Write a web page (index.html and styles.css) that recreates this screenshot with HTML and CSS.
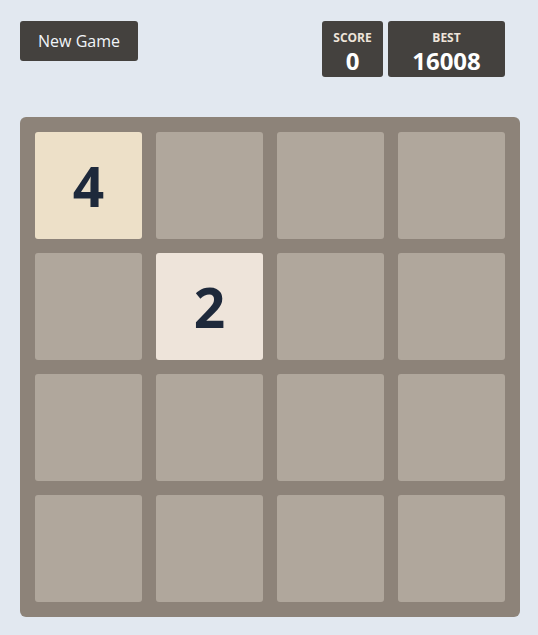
FILE: index.html
```html
<!DOCTYPE html>
<html>
<head>
<meta charset="utf-8">
<link rel="stylesheet" href="styles.css">
</head>
<body>
<div class="page">
  <header class="top">
    <button class="new-game">New Game</button>
    <div class="scores">
      <div class="score-box score"><div class="label">SCORE</div><div class="value">0</div></div>
      <div class="score-box best"><div class="label">BEST</div><div class="value">16008</div></div>
    </div>
  </header>
  <div class="board">
    <div class="cell t4">4</div><div class="cell"></div><div class="cell"></div><div class="cell"></div>
    <div class="cell"></div><div class="cell t2">2</div><div class="cell"></div><div class="cell"></div>
    <div class="cell"></div><div class="cell"></div><div class="cell"></div><div class="cell"></div>
    <div class="cell"></div><div class="cell"></div><div class="cell"></div><div class="cell"></div>
  </div>
</div>
</body>
</html>
```
FILE: styles.css
```css
html, body { margin: 0; padding: 0; }
body {
  background: #e2e8f0;
  font-family: "Open Sans", "Noto Sans", sans-serif;
  width: 538px;
  height: 635px;
  overflow: hidden;
}
.page { padding: 21px 18px 0 20px; }
.top {
  display: flex;
  justify-content: space-between;
  align-items: flex-start;
  height: 96px;
}
.new-game {
  width: 118px;
  height: 40px;
  background: #44413e;
  color: #f1f5f9;
  border: none;
  border-radius: 3px;
  font-family: inherit;
  font-size: 16px;
  padding: 0;
  cursor: pointer;
}
.scores { display: flex; gap: 5px; margin-right: 15px; }
.score-box {
  background: #44413e;
  border-radius: 3px;
  height: 56px;
  box-sizing: border-box;
  padding-top: 10px;
  display: flex;
  flex-direction: column;
  align-items: center;
  color: #fff;
}
.score { width: 61px; }
.best { width: 117px; }
.label { font-size: 12px; font-weight: 700; color: #eee4da; line-height: 13px; }
.value { font-size: 24px; font-weight: 700; line-height: 22px; margin-top: 6px; }
.board {
  width: 500px;
  height: 500px;
  box-sizing: border-box;
  background: #8d8379;
  border-radius: 6px;
  padding: 15px;
  display: grid;
  grid-template-columns: repeat(4, 1fr);
  grid-template-rows: repeat(4, 1fr);
  gap: 14px;
}
.cell {
  background: #b0a79c;
  border-radius: 3px;
  display: flex;
  align-items: center;
  justify-content: center;
  font-size: 55px;
  font-weight: 700;
  color: #1e293b;
}
.t4 { background: #ede0c8; }
.t2 { background: #eee4da; }
```
